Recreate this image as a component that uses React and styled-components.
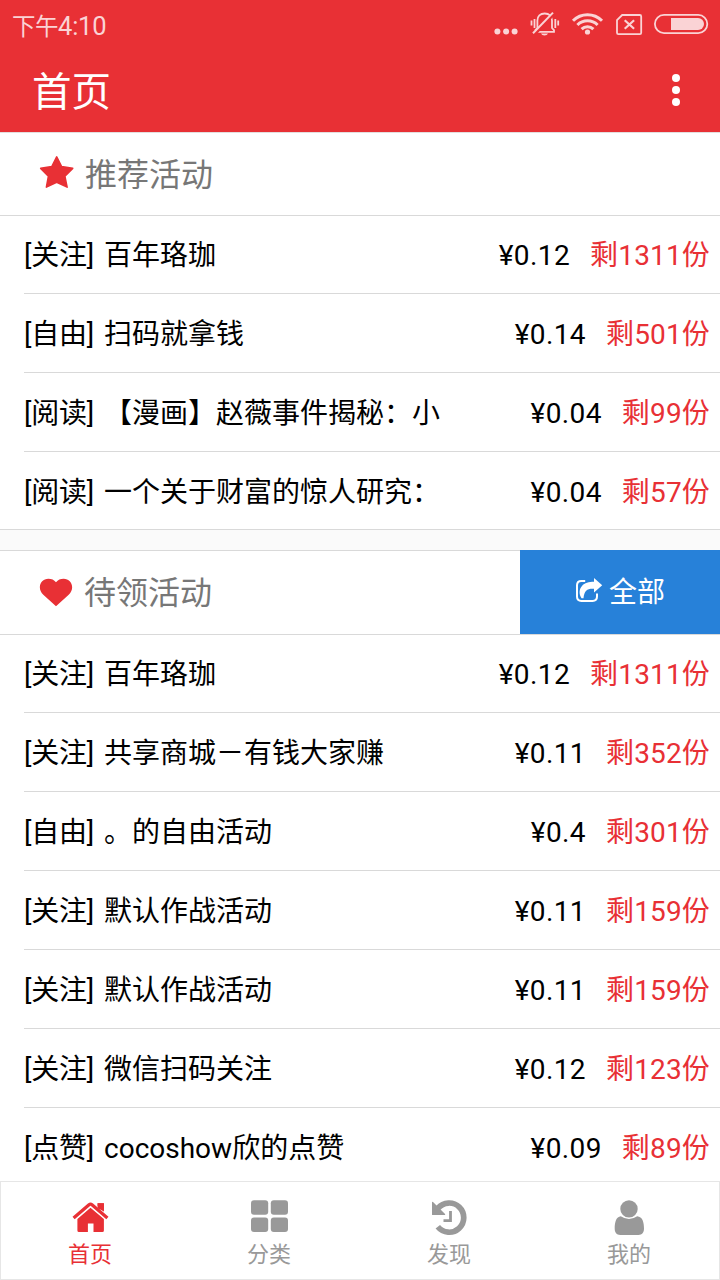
import React from 'react';
import styled, { createGlobalStyle } from 'styled-components';

const RED = '#e83035';
const PALE = '#fad3d5';
const LINE = '#d9d9d9';
const GREY = '#999';

const GlobalStyle = createGlobalStyle`
  *, *::before, *::after { box-sizing: border-box; }
  body { margin: 0; background: #fff; }
  svg { display: block; flex: none; }
`;

const Screen = styled.div`
  width: 720px;
  height: 1280px;
  display: flex;
  flex-direction: column;
  overflow: hidden;
  background: #fff;
  color: #000;
  font-family: Roboto, 'Noto Sans CJK SC', sans-serif;
  font-size: 28px;
`;

const TopArea = styled.header`
  flex: none;
  height: 133px;
  background: ${RED};
  border-bottom: 1px solid #e3dede;
`;

const StatusBar = styled.div`
  display: flex;
  justify-content: space-between;
  height: 50px;
  padding: 0 11px 0 12px;
  color: ${PALE};
`;

const Clock = styled.span`
  display: flex;
  align-items: baseline;
  font-size: 25.5px;
  line-height: 52px;
  letter-spacing: -0.2px;
`;

const Meridiem = styled.span`
  font-size: 23.5px;
  letter-spacing: -0.5px;
`;

const StatusIcons = styled.div`
  display: flex;
  padding-top: 10px;
`;

const TitleBar = styled.div`
  display: flex;
  justify-content: space-between;
  align-items: center;
  height: 80px;
  padding: 0 40px 0 32px;
  color: #fff;
`;

const Title = styled.h1`
  margin: 0;
  padding-top: 6px;
  font-size: 39.5px;
  font-weight: 400;
  line-height: 80px;
`;

const MenuButton = styled.button`
  display: flex;
  padding: 0;
  border: 0;
  background: none;
  color: inherit;
`;

const Content = styled.main`
  flex: 1;
  min-height: 0;
  overflow: hidden;
`;

const SectionHead = styled.div`
  display: flex;
  align-items: stretch;
  justify-content: space-between;
  height: ${p => p.$height}px;
  border-bottom: 1px solid ${LINE};
`;

const SectionTitle = styled.h2`
  display: flex;
  align-items: center;
  gap: ${p => p.$gap}px;
  margin: 0;
  padding-left: 38px;
  color: #777;
  font-size: 32px;
  font-weight: 400;
  line-height: 82px;
`;

const SectionLabel = styled.span`
  margin-top: ${p => p.$drop}px;
`;

const AllButton = styled.button`
  display: flex;
  align-items: center;
  justify-content: center;
  gap: 6px;
  width: 200px;
  height: 84px;
  margin-top: -1px;
  padding: 0 0 2px;
  border: 0;
  background: #2781d9;
  color: #fff;
  font: inherit;
`;

const AllLabel = styled.span`
  padding-bottom: 2px;
`;

const List = styled.ul`
  margin: -1px 0 0;
  padding: 0;
  list-style: none;
  border-bottom: 1px solid ${LINE};
`;

const Row = styled.li`
  display: flex;
  height: 79px;
  margin-left: 24px;
  padding-right: 10px;
  border-bottom: 1px solid ${LINE};
  line-height: 82px;
  white-space: nowrap;

  &:last-child {
    height: 77px;
    border-bottom: 0;
  }
`;

const Name = styled.span`
  flex: 1;
  display: flex;
  gap: 10px;
`;

const Kind = styled.span`
  letter-spacing: -0.22px;
`;

const Price = styled.span`
  margin-right: 20px;
  letter-spacing: 0.4px;
`;

const Left = styled.span`
  color: ${RED};
  letter-spacing: 0.16px;
`;

const Divider = styled.div`
  height: 21px;
  background: #fafafa;
  border-bottom: 1px solid ${LINE};
`;

const TabBar = styled.nav`
  flex: none;
  display: grid;
  grid-template-columns: 178px repeat(3, 180px);
  height: 99px;
  border: 1px solid #e6e6e6;
  background: #fff;
`;

const Tab = styled.a`
  display: flex;
  flex-direction: column;
  align-items: center;
  padding-top: 16px;
  color: ${p => (p.$active ? RED : GREY)};
  font-size: 22px;
  line-height: 34px;
`;

const Signal = () => (
  <svg width="120" height="28" viewBox="490 10 120 28" fill={PALE}>
    <circle cx="497.4" cy="31.4" r="3" />
    <circle cx="506.1" cy="31.4" r="3" />
    <circle cx="514.6" cy="31.4" r="3" />
    <g fill="none" stroke={PALE} strokeWidth="1.8">
      <path d="M536 31.8h18v-1.6l-2-2.2V20.500c0-4.200-2.800-7-7.300-7s-7.300 2.800-7.300 7v7.500l-2.300 2.400" />
      <path d="M531.500 20.500v5M534.500 19v9M555.300 19v9M558.200 20.500v5" />
      <path d="M534.900 34 553.800 14" stroke={RED} strokeWidth="3" />
      <path d="M533 33.300 553 12.600" strokeWidth="2" />
    </g>
    <path d="M541 33.400h7c-.6 1.300-1.800 2-3.500 2s-2.900-.7-3.500-2z" />
    <g fill="none" stroke={PALE} strokeWidth="3">
      <path d="M573 20.800a20.500 20.500 0 0 1 29 0" />
      <path d="M577.400 25a14.300 14.300 0 0 1 20.200 0" />
      <path d="M581.600 29.100a8.300 8.300 0 0 1 11.800 0" />
    </g>
    <circle cx="587.500" cy="32" r="2.600" />
  </svg>
);

const SimBattery = () => (
  <svg width="99" height="28" viewBox="610 10 99 28" fill="none" stroke={PALE}>
    <path d="M622.200 15h17.600q1.400 0 1.400 1.400v16.400q0 1.400-1.400 1.400h-21.400q-1.400 0-1.400-1.400V20.200z" strokeWidth="1.800" />
    <path d="m624.700 20.200 9.400 8.600M634.100 20.200l-9.400 8.600" strokeWidth="2.200" />
    <rect x="654.900" y="14.900" width="52.400" height="18.200" rx="9.100" strokeWidth="1.800" />
    <path d="M671 18h27a6 6 0 0 1 0 12h-27z" fill={PALE} stroke="none" />
  </svg>
);

const More = () => (
  <svg width="8" height="34" viewBox="0 0 8 34" fill="currentColor">
    <circle cx="4" cy="5" r="4" />
    <circle cx="4" cy="17" r="4" />
    <circle cx="4" cy="29" r="4" />
  </svg>
);

const Star = () => (
  <svg width="38" height="38" viewBox="38 155 38 38">
    <path
      d="m56.700 156.900 4.900 9.700 11.100 1.800-7.800 7.900 2.200 10.800-10.400-4.900-10.300 4.900 2-10.800-7.700-7.900 11.100-1.800z"
      fill={RED} stroke={RED} strokeWidth="1.600" strokeLinejoin="round"
    />
  </svg>
);

const Heart = () => (
  <svg width="36" height="35" viewBox="38 575 36 35" fill={RED}>
    <path d="M56 606.300 43.300 594.700C36.500 588 40.600 578.800 48.400 578.800c3.200 0 5.600 1 7.600 3.500 2-2.500 4.400-3.500 7.600-3.500 7.800 0 11.900 9.200 5.100 15.900z" />
  </svg>
);

const Share = () => (
  <svg width="28" height="28" viewBox="575 577 28 28">
    <path d="M585.200 580.900h-3.800q-4.400 0-4.400 4.400v11.300q0 4.400 4.400 4.400h11.200q4.400 0 4.400-4.400v-3.100" fill="none" stroke="#fff" strokeWidth="2" />
    <path d="M594 577.900l8.200 7.300-8.200 7.300v-3.700c-6.500-.4-9.700 1.400-10.500 9.400h-2c-2.800-4.500-2.300-9.200.5-12.300 2.600-3.200 6.800-4.200 12-4.200z" fill="#fff" />
  </svg>
);

const Home = () => (
  <svg width="38" height="40" viewBox="71 1198 38 40">
    <path d="M90.500 1207.800 103.900 1219v11.500q0 1.500-1.500 1.500H93.500v-8.600h-5.600v8.600h-9q-1.500 0-1.500-1.500V1219z" fill="currentColor" />
    <path d="M97.600 1203.200h6.300v10.500l-6.300-5.500z" fill="currentColor" />
    <path d="M73.600 1218 89 1204.800q1.500-1.200 3 0l15.400 13.200" fill="none" stroke="#fff" strokeWidth="5" />
    <path d="M97.600 1203.200h6.300v8l-6.300-3z" fill="currentColor" />
    <path d="M73.600 1217.900 89 1204.700q1.500-1.200 3 0l15.400 13.200" fill="none" stroke="currentColor" strokeWidth="3.300" />
  </svg>
);

const Grid = () => (
  <svg width="38" height="40" viewBox="250 1198 38 40" fill="currentColor">
    <rect x="251" y="1200.200" width="17.200" height="14.600" rx="3" />
    <rect x="270.800" y="1200.200" width="17.200" height="14.600" rx="3" />
    <rect x="251" y="1217.500" width="17.200" height="14.600" rx="3" />
    <rect x="270.800" y="1217.500" width="17.200" height="14.600" rx="3" />
  </svg>
);

const History = () => (
  <svg width="38" height="40" viewBox="430 1198 38 40" fill="none" stroke="currentColor">
    <path d="M438 1208.200A14.600 14.600 0 1 1 437.800 1226.800" strokeWidth="5.700" />
    <path d="M432.600 1202.500v12h12z" fill="currentColor" strokeWidth="1.200" strokeLinejoin="round" />
    <path d="M450.500 1211v9.700h-7" strokeWidth="2.800" />
  </svg>
);

const Person = () => (
  <svg width="38" height="40" viewBox="610 1198 38 40" fill="currentColor">
    <circle cx="629" cy="1208.900" r="8.700" />
    <path d="M620.800 1216.200q8.200 5.600 16.400 0c5.200.4 6.800 5.800 6.800 12.400 0 4-2 6.400-5.500 6.400h-18.300c-3.500 0-5.500-2.400-5.500-6.400 0-6.600 1.600-12 6.100-12.400z" />
  </svg>
);

const recommended = [
  ['关注', '百年珞珈', '0.12', 1311],
  ['自由', '扫码就拿钱', '0.14', 501],
  ['阅读', '【漫画】赵薇事件揭秘：小', '0.04', 99],
  ['阅读', '一个关于财富的惊人研究：', '0.04', 57],
];

const pending = [
  ['关注', '百年珞珈', '0.12', 1311],
  ['关注', '共享商城－有钱大家赚', '0.11', 352],
  ['自由', '。的自由活动', '0.4', 301],
  ['关注', '默认作战活动', '0.11', 159],
  ['关注', '默认作战活动', '0.11', 159],
  ['关注', '微信扫码关注', '0.12', 123],
  ['点赞', 'cocoshow欣的点赞', '0.09', 89],
];

const tabs = [
  ['首页', Home],
  ['分类', Grid],
  ['发现', History],
  ['我的', Person],
];

const ActivityList = ({ items }) => (
  <List>
    {items.map(([kind, name, price, left], i) => (
      <Row key={i}>
        <Name>
          <Kind>[{kind}]</Kind>
          <span>{name}</span>
        </Name>
        <Price>¥{price}</Price>
        <Left>剩{left}份</Left>
      </Row>
    ))}
  </List>
);

export default function App() {
  return (
    <Screen>
      <GlobalStyle />
      <TopArea>
        <StatusBar>
          <Clock><Meridiem>下午</Meridiem>4:10</Clock>
          <StatusIcons>
            <Signal />
            <SimBattery />
          </StatusIcons>
        </StatusBar>
        <TitleBar>
          <Title>首页</Title>
          <MenuButton aria-label="菜单"><More /></MenuButton>
        </TitleBar>
      </TopArea>
      <Content>
        <SectionHead $height={83}>
          <SectionTitle $gap={9}>
            <Star />
            <SectionLabel $drop={2}>推荐活动</SectionLabel>
          </SectionTitle>
        </SectionHead>
        <ActivityList items={recommended} />
        <Divider />
        <SectionHead $height={84}>
          <SectionTitle $gap={10}>
            <Heart />
            <SectionLabel $drop={1}>待领活动</SectionLabel>
          </SectionTitle>
          <AllButton><Share /><AllLabel>全部</AllLabel></AllButton>
        </SectionHead>
        <ActivityList items={pending} />
      </Content>
      <TabBar>
        {tabs.map(([label, Icon], i) => (
          <Tab key={label} $active={i === 0}>
            <Icon />
            <span>{label}</span>
          </Tab>
        ))}
      </TabBar>
    </Screen>
  );
}
